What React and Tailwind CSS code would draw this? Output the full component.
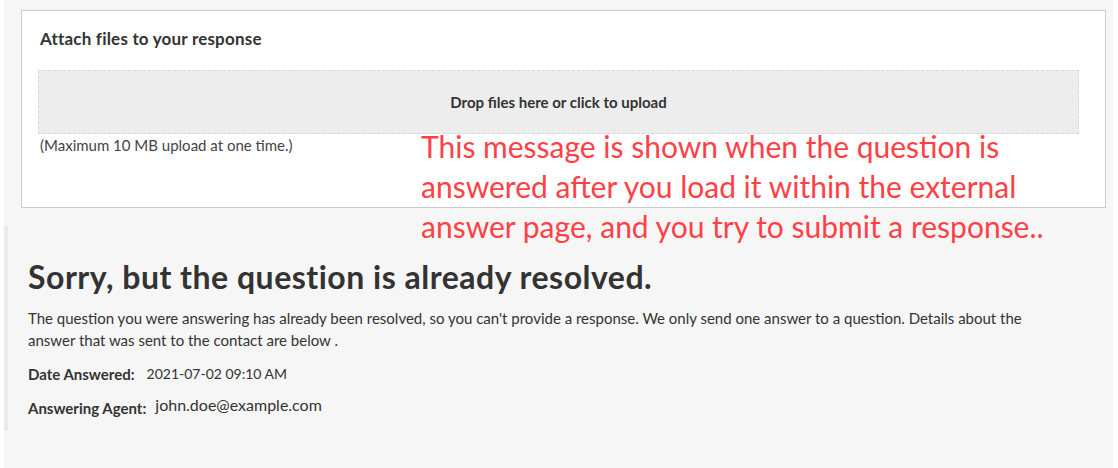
import React from 'react'

export default function App() {
  return (
    <div className="min-h-[468px] bg-white font-['Lato',sans-serif] text-[#333]">
      <div className="relative ml-[4px] mr-[5px] min-h-[468px] bg-[#f6f6f6] pt-[10px]">
        {/* upload card */}
        <div className="ml-[17px] mr-[7px] border border-[#cccccc] bg-white pt-[16px] pb-[51px] pl-[16px] pr-[26px]">
          <h3 className="pl-[2px] text-[17px] font-bold leading-[24px] tracking-[0.2px] text-[#333]">Attach files to your response</h3>
          <div className="mt-[19px] flex h-[64px] items-center justify-center border border-dashed border-[#d9d9d9] bg-[#ededed] text-[15px] font-bold text-[#333]">
            Drop files here or click to upload
          </div>
          <p className="pl-[2px] text-[15px] leading-[22px] text-[#444]">(Maximum 10 MB upload at one time.)</p>
        </div>

        {/* resolved notice */}
        <div className="mt-[18px] border-l-4 border-[#ebebeb] pt-[33px] pb-[12px] pl-[20px]">
          <h1 className="text-[32px] font-bold leading-[36px] tracking-[0.5px] text-[#333]">Sorry, but the question is already resolved.</h1>
          <p className="mt-[12px] max-w-[1010px] text-[15px] leading-[22px] text-[#333]">
            The question you were answering has already been resolved, so you can't provide a response. We only send one answer to a question. Details about the answer that was sent to the contact are below .
          </p>
          <div className="mt-[12px] flex items-center gap-[12px] leading-[22px]">
            <span className="text-[15px] font-bold">Date Answered:</span>
            <span className="text-[14px]">2021-07-02 09:10 AM</span>
          </div>
          <div className="mt-[9px] flex items-end gap-[9px] leading-[22px]">
            <span className="text-[15px] font-bold">Answering Agent:</span>
            <span className="mb-[3px] text-[16px]">john.doe@example.com</span>
          </div>
        </div>

        {/* annotation */}
        <div className="absolute left-[417px] top-[126px] w-[680px] text-[30px] leading-[40px] text-[#ff4146]">
          This message is shown when the question is<br />
          answered after you load it within the external<br />
          answer page, and you try to submit a response..
        </div>
      </div>
    </div>
  )
}
